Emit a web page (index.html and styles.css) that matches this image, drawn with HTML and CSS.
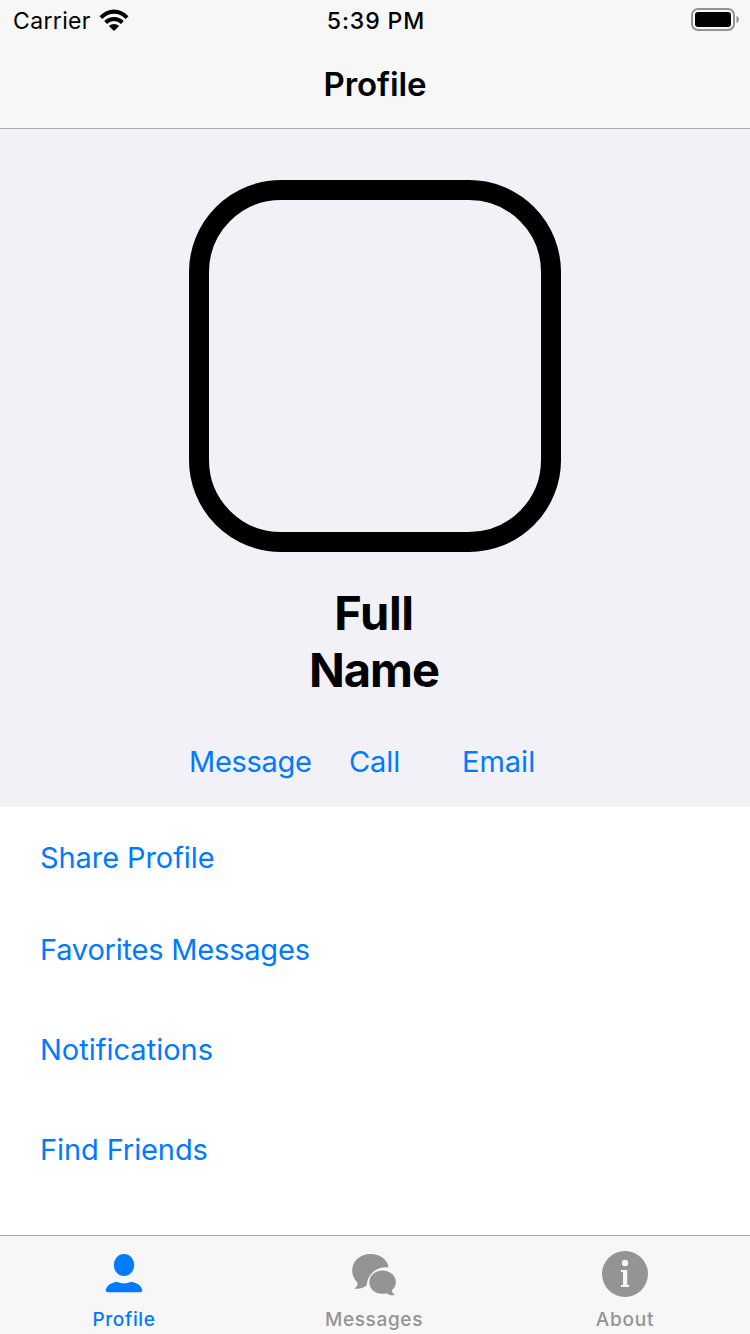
FILE: index.html
```html
<!DOCTYPE html>
<html lang="en">
<head>
<meta charset="utf-8">
<title>Profile</title>
<link rel="stylesheet" href="styles.css">
</head>
<body>
<div class="screen">
  <header class="top">
    <div class="status">
      <div class="carrier"><span>Carrier</span>
        <svg class="wifi" width="30" height="22" viewBox="0 0 30 22">
          <path d="M0.5 7.2Q7 .6 15 .6T29.500 7.200L26.700 10.100Q21.500 4.800 15 4.800T3.300 10.100Z"/>
          <path d="M5.200 12Q9.500 7.900 15 7.900T24.800 12L22 14.900Q19 12.100 15 12.100T8 14.900Z"/>
          <path d="M9.900 17Q12 15.100 15 15.100T20.100 17L15 22Z"/>
        </svg>
      </div>
      <div class="time">5:39 PM</div>
      <div class="power">
        <svg width="48" height="23" viewBox="0 0 48 23">
          <rect x="1" y="1" width="42" height="21" rx="6" fill="none" stroke="#949494" stroke-width="2"/>
          <rect x="4" y="4" width="36" height="15" rx="3"/>
          <path d="M45.500 7.700Q48 8.800 48 11.500T45.500 15.300Z" fill="#949494"/>
        </svg>
      </div>
    </div>
    <h1 class="title">Profile</h1>
  </header>
  <section class="hero">
    <div class="avatar"></div>
    <h2 class="name"><span class="first">Full</span><span class="last">Name</span></h2>
    <div class="actions">
      <a class="message">Message</a><a class="call">Call</a><a class="email">Email</a>
    </div>
  </section>
  <nav class="links">
    <a class="share">Share Profile</a>
    <a class="favorites">Favorites Messages</a>
    <a class="notifications">Notifications</a>
    <a class="friends">Find Friends</a>
  </nav>
  <footer class="tabs">
    <div class="tab active">
      <svg width="48" height="48" viewBox="0 0 48 48">
        <ellipse cx="24" cy="15" rx="10.200" ry="11"/>
        <path d="M16.800 31.800Q24 35.200 31.200 31.800C37.500 33 41.500 36 42.300 40.300Q42.300 42.300 40 42.300H8Q5.700 42.300 5.700 40.300C6.500 36 10.500 33 16.800 31.800Z"/>
      </svg>
      <span class="label-profile">Profile</span>
    </div>
    <div class="tab">
      <svg width="48" height="48" viewBox="0 0 48 48">
        <path d="M20.500 4C30 4 37.500 9.600 38.600 17.300C27.500 15.900 17.500 23.500 16.700 35.500C14.500 37.200 9.500 39.300 4.200 38.800C6.800 37 8 34.700 7.300 32.400C4.300 29.500 2.200 25.500 2.200 20.500C2.200 11 10.200 4 20.500 4Z"/>
        <path d="M32.500 20.500C40.200 20.500 45.900 25.700 45.900 32C45.900 35.600 44.300 38.200 42 40.200C41.600 42 42.800 43.700 45.300 45.100C41.800 45.900 38.400 44.600 36.500 43.200C27 45.600 19.300 40.200 19.300 32C19.300 25.700 24.800 20.500 32.500 20.500Z"/>
      </svg>
      <span class="label-messages">Messages</span>
    </div>
    <div class="tab">
      <svg width="48" height="48" viewBox="0 0 48 48">
        <circle cx="24" cy="24" r="23"/>
        <g fill="#f7f7f7"><circle cx="24" cy="13" r="3.200"/><path d="M20 20H26.200V35H28.200V37H20V35H22V22H20Z"/></g>
      </svg>
      <span class="label-about">About</span>
    </div>
  </footer>
</div>
</body>
</html>
```
FILE: styles.css
```css
* { box-sizing: border-box; }
body { margin: 0; font-family: Inter, "Liberation Sans", sans-serif; color: #000; }
.screen { width: 750px; height: 1334px; display: flex; flex-direction: column; background: #fff; }
svg { display: block; }
.top { height: 129px; background: #f7f7f7; border-bottom: 1px solid #acacb0; }
.status { height: 40px; display: grid; grid-template-columns: 1fr auto 1fr; padding: 0 11px 0 13px; font-size: 23px; line-height: 43px; }
.carrier { display: flex; gap: 8px; letter-spacing: 0.35px; }
.wifi { margin-top: 9px; }
.time { font-weight: 500; letter-spacing: 0.9px; }
.power { display: flex; justify-content: flex-end; padding-top: 8px; }
.title { margin: 0; font-size: 33px; line-height: 88px; font-weight: 600; text-align: center; letter-spacing: -0.1px; }
.hero { height: 678px; background: #f2f1f7; padding-top: 51px; display: flex; flex-direction: column; align-items: center; }
.avatar { width: 372px; height: 372px; border: 20px solid #000; border-radius: 92px; }
.name { margin: 32px 0 0; font-size: 47px; line-height: 57px; font-weight: 700; display: flex; flex-direction: column; align-items: center; letter-spacing: -1px; }
.first { letter-spacing: -0.3px; margin-right: 2px; }
.last { margin-right: 2px; }
.actions { align-self: stretch; display: grid; grid-template-columns: 160px 113px 1fr; padding-left: 189px; margin-top: 44px; }
.actions a, .links a { font-size: 29px; line-height: 40px; color: #007aff; white-space: nowrap; }
.actions .message { letter-spacing: -0.3px; }
.actions .call { letter-spacing: -0.1px; }
.links { flex: 1; padding: 31px 40px 0; display: flex; flex-direction: column; }
.links .share { letter-spacing: -0.08px; }
.links .favorites { margin-top: 52px; letter-spacing: -0.2px; }
.notifications, .friends { margin-top: 60px; }
.links .friends { letter-spacing: -0.1px; }
.tabs { height: 99px; border-top: 1px solid #acacac; background: #f7f7f7; display: grid; grid-template-columns: 248px 252px 250px; }
.tab { display: flex; flex-direction: column; align-items: center; padding-top: 14px; color: #949494; fill: currentColor; font-size: 19px; line-height: 24px; font-weight: 500; letter-spacing: 0.65px; }
.tab span { margin-top: 10px; }
.tab .label-about { letter-spacing: 0.8px; }
.active { color: #007aff; }
```
